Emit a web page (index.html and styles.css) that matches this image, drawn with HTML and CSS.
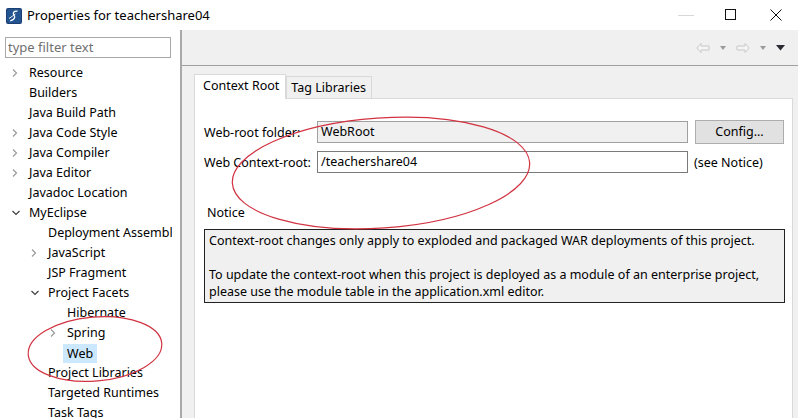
FILE: index.html
```html
<!DOCTYPE html>
<html>
<head>
<meta charset="utf-8">
<link rel="stylesheet" href="styles.css">
</head>
<body>
<div class="window">
  <div class="titlebar">
    <svg class="app-icon" width="16" height="16" viewBox="0 0 16 16">
      <rect x="0" y="0" width="16" height="16" rx="2" fill="#1c3f73"/>
      <rect x="1" y="1" width="14" height="14" rx="1.5" fill="#24548f"/>
      <path d="M11.5 3.2 C8 2.6 6.2 5 8 7.2 C9.6 9.2 8.4 12 4.2 12.8" fill="none" stroke="#fff" stroke-width="1.3"/>
      <path d="M3 10.5 L9.5 6" fill="none" stroke="#fff" stroke-width="0.9"/>
    </svg>
    <span class="title">Properties for teachershare04</span>
    <div class="wincontrols">
      <span class="wc min"><svg width="18" height="10" viewBox="0 0 18 10"><line x1="1" y1="5.5" x2="17" y2="5.5" stroke="#d8d8d8" stroke-width="1"/></svg></span>
      <span class="wc max"><svg width="12" height="12" viewBox="0 0 12 12"><rect x="0.5" y="0.5" width="10" height="10" fill="none" stroke="#111" stroke-width="1"/></svg></span>
      <span class="wc close"><svg width="12" height="12" viewBox="0 0 12 12"><path d="M0.5 0.5 L11.5 11.5 M11.5 0.5 L0.5 11.5" stroke="#111" stroke-width="1"/></svg></span>
    </div>
  </div>
  <div class="main">
    <div class="sidebar">
      <div class="filter">type filter text</div>
      <div class="tree">
        <div class="item l1"><span class="tw"><svg width="6" height="8" viewBox="0 0 6 8"><path d="M1 0.5 L4.5 4 L1 7.5" fill="none" stroke="#9a9a9a" stroke-width="1.2"/></svg></span><span class="lbl">Resource</span></div>
        <div class="item l1"><span class="tw"></span><span class="lbl">Builders</span></div>
        <div class="item l1"><span class="tw"></span><span class="lbl">Java Build Path</span></div>
        <div class="item l1"><span class="tw"><svg width="6" height="8" viewBox="0 0 6 8"><path d="M1 0.5 L4.5 4 L1 7.5" fill="none" stroke="#9a9a9a" stroke-width="1.2"/></svg></span><span class="lbl">Java Code Style</span></div>
        <div class="item l1"><span class="tw"><svg width="6" height="8" viewBox="0 0 6 8"><path d="M1 0.5 L4.5 4 L1 7.5" fill="none" stroke="#9a9a9a" stroke-width="1.2"/></svg></span><span class="lbl">Java Compiler</span></div>
        <div class="item l1"><span class="tw"><svg width="6" height="8" viewBox="0 0 6 8"><path d="M1 0.5 L4.5 4 L1 7.5" fill="none" stroke="#9a9a9a" stroke-width="1.2"/></svg></span><span class="lbl">Java Editor</span></div>
        <div class="item l1"><span class="tw"></span><span class="lbl">Javadoc Location</span></div>
        <div class="item l1"><span class="tw"><svg width="8" height="6" viewBox="0 0 8 6"><path d="M0.5 1 L4 4.5 L7.5 1" fill="none" stroke="#404040" stroke-width="1.2"/></svg></span><span class="lbl">MyEclipse</span></div>
        <div class="item l2"><span class="tw"></span><span class="lbl">Deployment Assembly</span></div>
        <div class="item l2"><span class="tw"><svg width="6" height="8" viewBox="0 0 6 8"><path d="M1 0.5 L4.5 4 L1 7.5" fill="none" stroke="#9a9a9a" stroke-width="1.2"/></svg></span><span class="lbl">JavaScript</span></div>
        <div class="item l2"><span class="tw"></span><span class="lbl">JSP Fragment</span></div>
        <div class="item l2"><span class="tw"><svg width="8" height="6" viewBox="0 0 8 6"><path d="M0.5 1 L4 4.5 L7.5 1" fill="none" stroke="#404040" stroke-width="1.2"/></svg></span><span class="lbl">Project Facets</span></div>
        <div class="item l3"><span class="tw"></span><span class="lbl">Hibernate</span></div>
        <div class="item l3"><span class="tw"><svg width="6" height="8" viewBox="0 0 6 8"><path d="M1 0.5 L4.5 4 L1 7.5" fill="none" stroke="#9a9a9a" stroke-width="1.2"/></svg></span><span class="lbl">Spring</span></div>
        <div class="item l3"><span class="tw"></span><span class="lbl sel">Web</span></div>
        <div class="item l2"><span class="tw"></span><span class="lbl">Project Libraries</span></div>
        <div class="item l2"><span class="tw"></span><span class="lbl">Targeted Runtimes</span></div>
        <div class="item l2"><span class="tw"></span><span class="lbl">Task Tags</span></div>
      </div>
    </div>
    <div class="content">
      <div class="toolbar">
        <svg width="14" height="10" viewBox="0 0 14 10"><path d="M5 0.5 L0.8 5 L5 9.5 L5 7 L13 7 L13 3 L5 3 Z" fill="#f4f4f4" stroke="#c8c8c8" stroke-width="1"/></svg>
        <svg class="drop" width="6" height="4" viewBox="0 0 6 4"><path d="M0 0 L6 0 L3 4 Z" fill="#9a9a9a"/></svg>
        <svg class="fwd" width="14" height="10" viewBox="0 0 14 10"><path d="M9 0.5 L13.2 5 L9 9.5 L9 7 L1 7 L1 3 L9 3 Z" fill="#f4f4f4" stroke="#c8c8c8" stroke-width="1"/></svg>
        <svg class="drop" width="6" height="4" viewBox="0 0 6 4"><path d="M0 0 L6 0 L3 4 Z" fill="#9a9a9a"/></svg>
        <svg class="menu" width="9" height="6" viewBox="0 0 9 6"><path d="M0 0 L9 0 L4.5 5.5 Z" fill="#2b2b33"/></svg>
      </div>
      <div class="tabfolder">
        <div class="tabs">
          <div class="tab active">Context Root</div>
          <div class="tab">Tag Libraries</div>
        </div>
        <div class="panel">
          <div class="form">
            <span class="label">Web-root folder:</span>
            <div class="input disabled">WebRoot</div>
            <div class="button">Config...</div>
            <span class="label">Web Context-root:</span>
            <div class="input">/teachershare04</div>
            <span class="hint">(see Notice)</span>
          </div>
          <div class="notice-label">Notice</div>
          <div class="notice">Context-root changes only apply to exploded and packaged WAR deployments of this project.<br><br>To update the context-root when this project is deployed as a module of an enterprise project,<br>please use the module table in the application.xml editor.</div>
        </div>
      </div>
    </div>
  </div>
  <svg class="marks" width="798" height="418" viewBox="0 0 798 418">
    <ellipse cx="381" cy="173" rx="149" ry="55" transform="rotate(-4 381 173)" fill="none" stroke="#d23341" stroke-width="1.2"/>
    <ellipse cx="95" cy="349" rx="67" ry="32" transform="rotate(-5 95 349)" fill="none" stroke="#d23341" stroke-width="1.2"/>
  </svg>
</div>
</body>
</html>
```
FILE: styles.css
```css
* { box-sizing: border-box; }
html, body { margin: 0; padding: 0; }
body {
  width: 798px;
  height: 418px;
  overflow: hidden;
  font-family: "Noto Sans", "Open Sans", sans-serif;
  font-size: 12px;
  color: #000;
  background: #fff;
}
.window {
  position: relative;
  width: 798px;
  height: 418px;
  display: flex;
  flex-direction: column;
}
.titlebar {
  height: 30px;
  display: flex;
  align-items: center;
  background: #fff;
  padding-left: 6px;
  flex: none;
}
.app-icon { flex: none; margin-top: 2px; }
.title {
  margin-left: 5px;
  font-size: 13px;
  color: #000;
}
.wincontrols {
  margin-left: auto;
  display: flex;
  align-items: center;
  height: 30px;
}
.wc {
  height: 30px;
  display: flex;
  align-items: center;
  justify-content: center;
}
.wc.min { width: 44px; }
.wc.max { width: 46px; }
.wc.close { width: 44px; }
.main {
  flex: 1;
  display: flex;
  min-height: 0;
}
.sidebar {
  width: 182px;
  flex: none;
  background: #fff;
  border-right: 2px solid #a9a9a9;
  padding-top: 7px;
  overflow: hidden;
}
.filter {
  margin-left: 5px;
  width: 166px;
  height: 21px;
  border: 1px solid #a8a8a8;
  color: #707070;
  font-size: 13px;
  line-height: 19px;
  padding-left: 2px;
}
.tree {
  margin-top: 5px;
  width: 172px;
  overflow: hidden;
}
.item {
  height: 20px;
  display: flex;
  align-items: center;
  white-space: nowrap;
  font-size: 12.5px;
}
.item.l1 { padding-left: 12px; }
.item.l2 { padding-left: 31px; }
.item.l3 { padding-left: 50px; }
.tw {
  width: 17px;
  flex: none;
  display: flex;
  align-items: center;
}
.lbl { line-height: 20px; }
.lbl.sel {
  background: #cce8ff;
  padding: 0 4px;
  margin-left: -4px;
  height: 19px;
  line-height: 19px;
}
.content {
  flex: 1;
  background: #f0f0f0;
  display: flex;
  flex-direction: column;
  min-width: 0;
}
.toolbar {
  height: 36px;
  flex: none;
  border-bottom: 1px solid #a0a0a0;
  display: flex;
  align-items: center;
  justify-content: flex-end;
  padding-right: 13px;
  padding-top: 1px;
}
.toolbar .drop { margin-left: 10px; margin-right: 10px; }
.toolbar .menu { margin-left: 0; }
.tabfolder {
  flex: 1;
  padding: 7px 5px 0 12px;
  display: flex;
  flex-direction: column;
}
.tabs {
  display: flex;
  align-items: flex-end;
  height: 25px;
  flex: none;
}
.tab {
  height: 22px;
  padding: 0 5px 0 4px;
  border: 1px solid #d9d9d9;
  border-bottom: none;
  background: #f0f0f0;
  font-size: 12.5px;
  line-height: 21px;
}
.tab.active {
  height: 25px;
  background: #fff;
  padding: 0 6px 0 8px;
  line-height: 22px;
  margin-bottom: -1px;
  position: relative;
}
.panel {
  flex: 1;
  background: #fff;
  border: 1px solid #d9d9d9;
  border-bottom: none;
  padding: 21px 8px 0 9px;
}
.form {
  display: grid;
  grid-template-columns: 106px 371px 89px;
  column-gap: 7px;
  row-gap: 6px;
  grid-auto-rows: 24px;
  align-items: center;
}
.label { font-size: 12.5px; white-space: nowrap; }
.input {
  height: 22px;
  border: 1px solid #7a7a7a;
  background: #fff;
  padding-left: 3px;
  line-height: 20px;
  font-size: 12.5px;
}
.input.disabled {
  background: #f0f0f0;
  border-color: #a0a0a0;
}
.button {
  height: 24px;
  border: 1px solid #adadad;
  background: #e1e1e1;
  text-align: center;
  line-height: 22px;
  font-size: 12.5px;
}
.hint { font-size: 12.5px; margin-left: -1px; white-space: nowrap; }
.notice-label {
  margin-top: 30px;
  margin-left: 3px;
  line-height: 17px;
  font-size: 12.5px;
}
.notice {
  margin-top: 8px;
  width: 581px;
  border: 1px solid #222;
  background: #f0f0f0;
  padding: 2px 4px 2px 4px;
  line-height: 17px;
  font-size: 12.5px;
  white-space: nowrap;
}
.marks {
  position: absolute;
  left: 0;
  top: 0;
  pointer-events: none;
}
```
